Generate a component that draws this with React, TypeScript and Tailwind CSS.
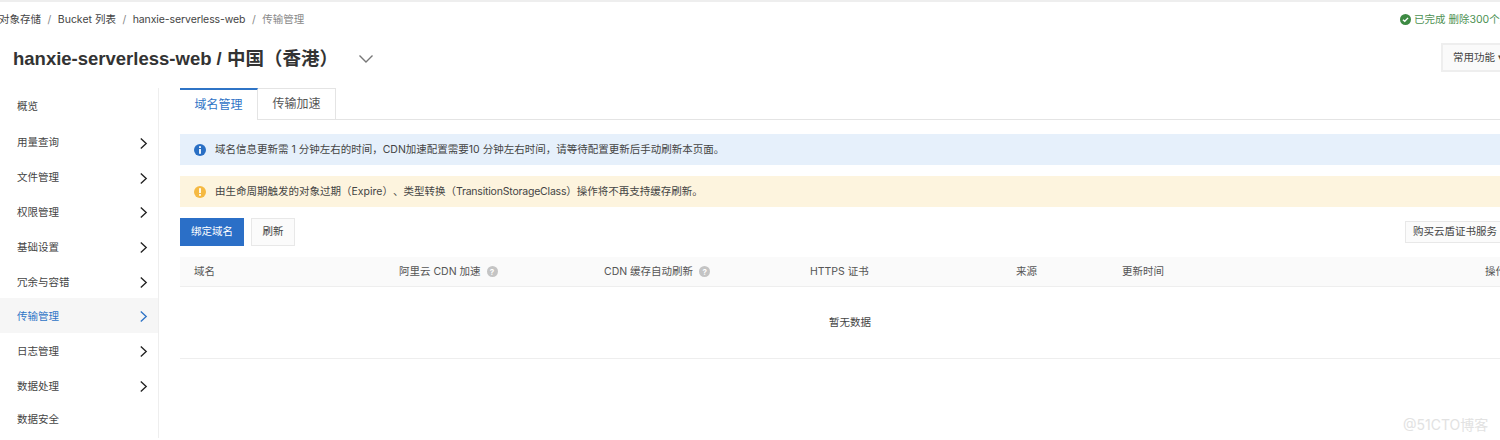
import React from "react";

const font = { fontFamily: 'Inter, "Noto Sans CJK SC", sans-serif' };
const titleFont = { fontFamily: '"Liberation Sans", "Noto Sans CJK SC", sans-serif' };

function Chevron({ className }: { className: string }) {
  return (
    <svg viewBox="0 0 10 14" className={className} fill="none" stroke="currentColor" strokeWidth="1.5">
      <path d="M2 1.5 L8 7 L2 12.5" />
    </svg>
  );
}

function Help() {
  return (
    <span className="ml-[6px] inline-flex h-[11px] w-[11px] items-center justify-center rounded-full bg-[#c4c4c4] text-[8px] font-bold leading-none text-white">?</span>
  );
}

const menu: [string, boolean, number, boolean][] = [
  ["概览", false, 37, false],
  ["用量查询", true, 36, false],
  ["文件管理", true, 34, false],
  ["权限管理", true, 35, false],
  ["基础设置", true, 35, false],
  ["冗余与容错", true, 33, true],
  ["传输管理", true, 35, true],
  ["日志管理", true, 35, true],
  ["数据处理", true, 35, true],
  ["数据安全", false, 32, true],
];

const cols: { t: string; w: string; help?: boolean }[] = [
  { t: "域名", w: "w-[205px]" },
  { t: "阿里云 CDN 加速", w: "w-[205px]", help: true },
  { t: "CDN 缓存自动刷新", w: "w-[206px]", help: true },
  { t: "HTTPS 证书", w: "w-[206px]" },
  { t: "来源", w: "w-[106px]" },
  { t: "更新时间", w: "w-[363px]" },
  { t: "操作", w: "w-[60px]" },
];

export default function App() {
  return (
    <div style={font} className="relative h-[440px] w-[1500px] overflow-hidden bg-white text-[#333]">
      <div className="h-[2px] bg-[#eeeeee]" />
      <div className="flex h-[35px] w-[1500px] items-center justify-between">
        <div className="-ml-px flex items-center whitespace-nowrap text-[10.5px] text-[#444]">
          <span>对象存储</span>
          <span className="mx-[6.5px] text-[#888]">/</span>
          <span>Bucket 列表</span>
          <span className="mx-[6.5px] text-[#888]">/</span>
          <span className="tracking-[-0.1px]">hanxie-serverless-web</span>
          <span className="mx-[6.5px] text-[#888]">/</span>
          <span className="text-[#888]">传输管理</span>
        </div>
        <div className="flex w-[100px] shrink-0 items-center overflow-hidden whitespace-nowrap text-[10.5px] text-[#4c9152]">
          <svg viewBox="0 0 12 12" className="mr-[3px] h-[11px] w-[11px] shrink-0">
            <circle cx="6" cy="6" r="6" fill="#3d8a43" />
            <path d="M3.2 6.2 L5.2 8 L8.8 4.2" fill="none" stroke="#fff" strokeWidth="1.5" />
          </svg>
          <span>已完成 删除300个文件</span>
        </div>
      </div>
      <div className="mb-[7px] flex h-[44px] w-[1500px] items-center justify-between">
        <div className="ml-[13px] flex items-center">
          <span style={titleFont} className="whitespace-nowrap text-[18.5px] font-semibold leading-none text-[#333]">hanxie-serverless-web / 中国（香港）</span>
          <svg viewBox="0 0 16 10" className="ml-[20px] h-[10px] w-[16px] text-[#777]" fill="none" stroke="currentColor" strokeWidth="1.4">
            <path d="M1.5 1.5 L8 8 L14.5 1.5" />
          </svg>
        </div>
        <div className="-mt-[3px] flex h-[29px] w-[59px] shrink-0 items-center overflow-hidden whitespace-nowrap border-2 border-r-0 border-[#eeeeee] bg-[#fafafa] pl-[10px] text-[10.5px] text-[#444]">
          常用功能 ▾
        </div>
      </div>
      <div className="flex">
        <aside className="h-[350px] w-[159px] shrink-0 border-r border-[#eeeeee]">
          {menu.map(([label, arrow, h, low]) => {
            const active = label === "传输管理";
            return (
              <div
                key={label}
                style={{ height: h }}
                className={`flex items-center justify-between pl-[17px] pr-[10px] text-[10.5px] ${low ? "pt-[2px]" : ""} ${active ? "bg-[#f6f6f6] text-[#2f74c6]" : "text-[#444]"}`}
              >
                <span>{label}</span>
                {arrow && <Chevron className={`h-[13px] w-[9px] ${active ? "text-[#2f74c6]" : "text-[#222]"}`} />}
              </div>
            );
          })}
        </aside>
        <main className="ml-[21px] w-[1340px] shrink-0">
          <div className="flex h-[32px] border-b border-[#e4e4e4]">
            <div className="z-10 flex h-[32px] w-[78px] items-center justify-center border-t-2 border-r border-t-[#2f74c6] border-r-[#e4e4e4] bg-white text-[12px] text-[#2f74c6]">域名管理</div>
            <div className="flex h-[31px] w-[78px] items-center justify-center border-t border-r border-[#e4e4e4] text-[12px] text-[#555]">传输加速</div>
          </div>
          <div className="mt-[14px] flex h-[31px] items-center bg-[#e6f0fb] pl-[14px] text-[10.5px] text-[#444]">
            <svg viewBox="0 0 12 12" className="mr-[9px] h-[12px] w-[12px]">
              <circle cx="6" cy="6" r="6" fill="#2a6fc4" />
              <rect x="5.1" y="2.2" width="1.8" height="1.8" fill="#fff" />
              <rect x="5.1" y="5" width="1.8" height="4.8" fill="#fff" />
            </svg>
            域名信息更新需 1 分钟左右的时间，CDN加速配置需要10 分钟左右时间，请等待配置更新后手动刷新本页面。
          </div>
          <div className="mt-[11px] flex h-[31px] items-center bg-[#fdf4de] pl-[14px] text-[10.5px] text-[#444] [text-spacing-trim:space-all]">
            <svg viewBox="0 0 12 12" className="mr-[9px] h-[12px] w-[12px]">
              <circle cx="6" cy="6" r="6" fill="#f5b942" />
              <rect x="5.1" y="2.2" width="1.8" height="4.8" fill="#fff" />
              <rect x="5.1" y="8" width="1.8" height="1.8" fill="#fff" />
            </svg>
            <span>
              由生命周期触发的对象过期（Expire）、类型转换（<span className="tracking-[-0.2px]">TransitionStorageClass</span>）操作将不再支持缓存刷新。
            </span>
          </div>
          <div className="mt-[11px] flex h-[27px] items-center">
            <div className="flex h-[28px] w-[64px] items-center justify-center bg-[#2b6fc7] text-[10.5px] text-white">绑定域名</div>
            <div className="ml-[7px] flex h-[28px] w-[44px] items-center justify-center border border-[#e8e8e8] bg-[#fbfbfb] text-[10.5px] text-[#444]">刷新</div>
            <div className="ml-[1110px] flex h-[22px] w-[110px] shrink-0 items-center whitespace-nowrap border border-[#e8e8e8] bg-[#fbfbfb] pl-[7px] text-[10.5px] text-[#444]">购买云盾证书服务</div>
          </div>
          <div className="mt-[12px] flex h-[30px] items-center border-b border-[#eeeeee] bg-[#fafafa] text-[10.5px] text-[#555]">
            {cols.map((c) => (
              <div key={c.t} className={`${c.w} flex shrink-0 items-center whitespace-nowrap pl-[14px]`}>
                {c.t}
                {c.help && <Help />}
              </div>
            ))}
          </div>
          <div className="flex h-[72px] items-center justify-center border-b border-[#eeeeee] text-[10.5px] text-[#444]">
            <span>暂无数据</span>
          </div>
        </main>
      </div>
      <div className="absolute left-[1403px] top-[414px] whitespace-nowrap text-[14px] text-[#e2e2e2]">@51CTO博客</div>
    </div>
  );
}
